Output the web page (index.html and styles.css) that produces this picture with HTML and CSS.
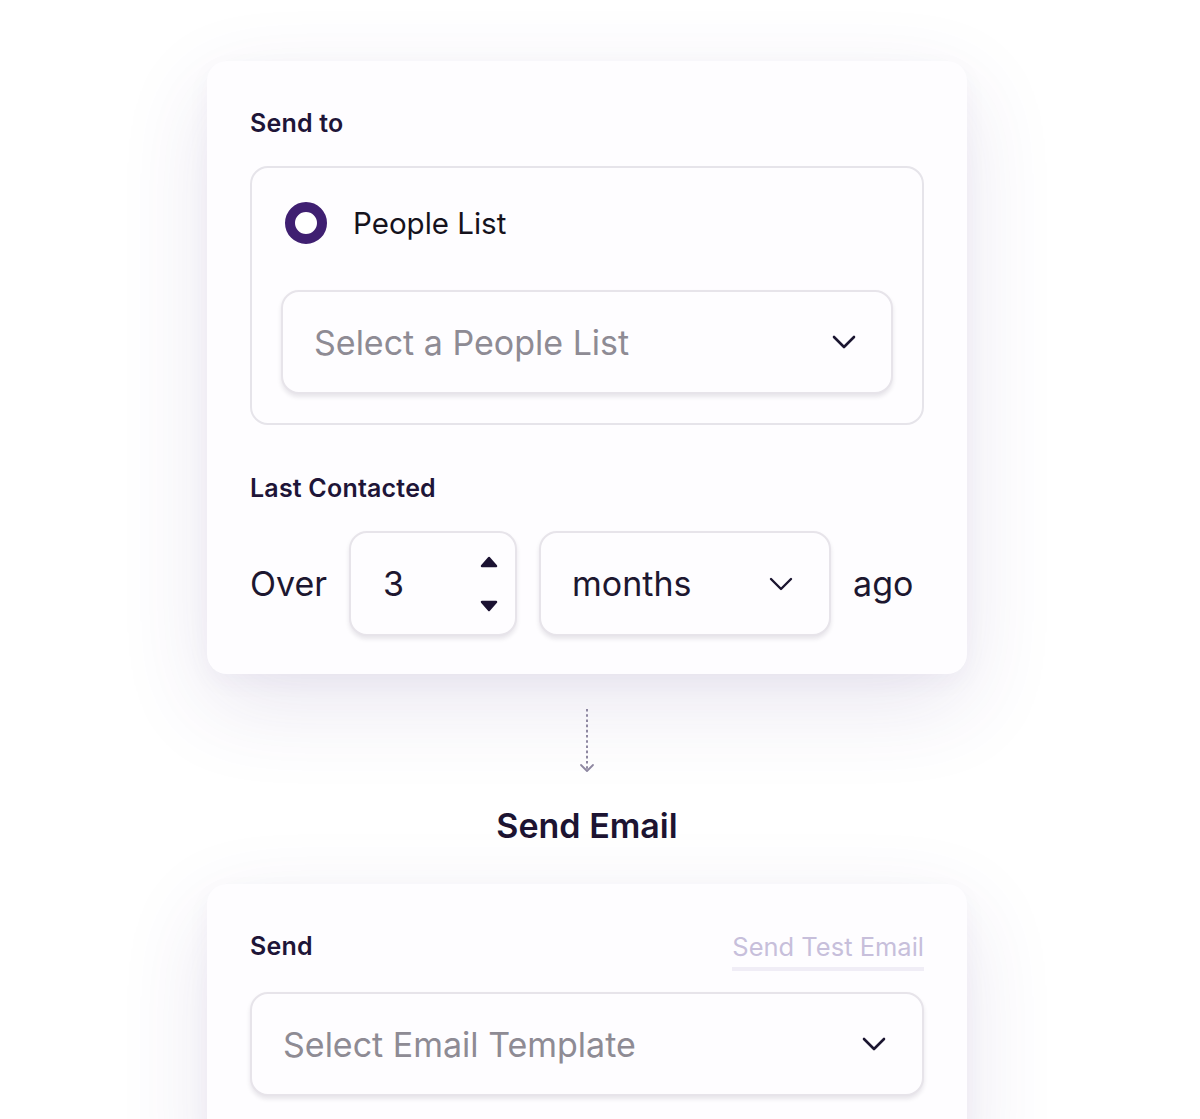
FILE: index.html
```html
<!DOCTYPE html>
<html lang="en">
<head>
<meta charset="utf-8">
<title>Workflow</title>
<link rel="stylesheet" href="styles.css">
</head>
<body>
<main class="flow">
  <section class="card card-trigger">
    <div class="label">Send to</div>
    <div class="option-box">
      <label class="radio-row">
        <span class="radio"></span>
        <span class="radio-text">People List</span>
      </label>
      <div class="select select-wide">
        <span class="placeholder">Select a People List</span>
        <svg class="chevron" width="24" height="14" viewBox="0 0 24 14"><path d="M2 2 L12 12 L22 2" fill="none" stroke="#1b1530" stroke-width="2.6" stroke-linecap="round" stroke-linejoin="round"/></svg>
      </div>
    </div>

    <div class="label label-gap">Last Contacted</div>
    <div class="contact-row">
      <span class="row-text">Over</span>
      <div class="field number-field">
        <span class="value">3</span>
        <span class="stepper">
          <svg width="20" height="12" viewBox="0 0 20 12"><path d="M10 2 L17 10 L3 10 Z" fill="#1b1232" stroke="#1b1232" stroke-width="2.5" stroke-linejoin="round"/></svg>
          <svg width="20" height="12" viewBox="0 0 20 12"><path d="M3 2 L17 2 L10 10 Z" fill="#1b1232" stroke="#1b1232" stroke-width="2.5" stroke-linejoin="round"/></svg>
        </span>
      </div>
      <div class="field unit-field">
        <span class="value">months</span>
        <svg class="chevron" width="24" height="14" viewBox="0 0 24 14"><path d="M2 2 L12 12 L22 2" fill="none" stroke="#1b1530" stroke-width="2.4" stroke-linecap="round" stroke-linejoin="round"/></svg>
      </div>
      <span class="row-text">ago</span>
    </div>
  </section>

  <svg class="connector" width="16" height="66" viewBox="0 0 16 66">
    <line x1="8" y1="1" x2="8" y2="62" stroke="#8e87a1" stroke-width="2" stroke-dasharray="2.6 2.6"/>
    <path d="M2 57 L8 63 L14 57" fill="none" stroke="#8e87a1" stroke-width="1.8" stroke-linecap="round" stroke-linejoin="round"/>
  </svg>

  <h2 class="step-title">Send Email</h2>

  <section class="card card-action">
    <div class="action-head">
      <div class="label">Send</div>
      <a class="test-link">Send Test Email</a>
    </div>
    <div class="select select-full">
      <span class="placeholder">Select Email Template</span>
      <svg class="chevron" width="24" height="14" viewBox="0 0 24 14"><path d="M2 2 L12 12 L22 2" fill="none" stroke="#1b1530" stroke-width="2.6" stroke-linecap="round" stroke-linejoin="round"/></svg>
    </div>
  </section>
</main>
</body>
</html>
```
FILE: styles.css
```css
html, body {
  margin: 0;
  height: 100%;
  overflow: hidden;
  background: #ffffff;
}

body {
  font-family: "Inter", "Liberation Sans", sans-serif;
  color: #1d1730;
}

.flow {
  display: flex;
  flex-direction: column;
  align-items: center;
  padding-top: 61px;
  padding-right: 26px;
}

.card {
  box-sizing: border-box;
  width: 760px;
  background: #fefdff;
  border-radius: 20px;
  padding: 48px 43px 38px;
  box-shadow: 0 30px 90px rgba(70, 50, 130, 0.12), 0 8px 24px rgba(70, 50, 130, 0.04);
}

.label {
  font-size: 25px;
  line-height: 29px;
  font-weight: 600;
  color: #1e1538;
  letter-spacing: 0.2px;
}

.label-gap {
  margin-top: 49px;
}

.option-box {
  margin-top: 28px;
  border: 2px solid #e6e4ea;
  border-radius: 18px;
  padding: 34px 29px 29px;
}

.radio-row {
  display: flex;
  align-items: center;
  gap: 26px;
  padding-left: 4px;
}

.radio {
  box-sizing: border-box;
  width: 42px;
  height: 42px;
  border-radius: 50%;
  border: 10px solid #3f1f71;
  background: #fff;
}

.radio-text {
  font-size: 29.5px;
  color: #15121c;
}

.select,
.field {
  box-sizing: border-box;
  display: flex;
  align-items: center;
  justify-content: space-between;
  height: 104px;
  background: #fefdff;
  border: 2px solid #e7e4ea;
  border-radius: 18px;
  box-shadow: 0 3px 4px rgba(30, 20, 50, 0.1);
}

.select {
  margin-top: 46px;
  padding: 0 35px 0 31px;
}

.placeholder {
  font-size: 34px;
  color: #8e8b94;
}

.chevron {
  display: block;
}

.contact-row {
  display: flex;
  align-items: center;
  gap: 22px;
  margin-top: 28px;
}

.row-text {
  font-size: 34px;
  color: #1d1730;
}

.field {
  height: 105px;
}

.number-field {
  width: 168px;
  padding: 0 16px 0 32px;
}

.unit-field {
  width: 292px;
  padding: 0 36px 0 31px;
}

.value {
  font-size: 34px;
  color: #1d1730;
}

.stepper {
  display: flex;
  flex-direction: column;
  gap: 32px;
}

.stepper svg {
  display: block;
}

.connector {
  display: block;
  margin-top: 34px;
}

.step-title {
  margin: 31px 0 0;
  font-size: 34px;
  line-height: 41px;
  font-weight: 600;
  color: #1d1432;
}

.card-action {
  margin-top: 38px;
  padding-top: 48px;
  padding-bottom: 80px;
}

.action-head {
  display: flex;
  justify-content: space-between;
  align-items: flex-start;
}

.test-link {
  font-size: 25.5px;
  line-height: 29px;
  color: #c7bfdb;
  padding-bottom: 6px;
  border-bottom: 4px solid #f0edf6;
  cursor: pointer;
}

.select-full {
  margin-top: 21px;
  padding: 0 36px 0 31px;
}
```
